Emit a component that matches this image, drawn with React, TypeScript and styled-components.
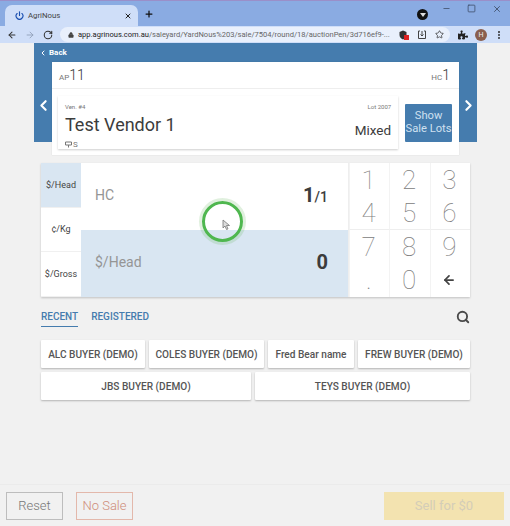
import styled, { createGlobalStyle } from "styled-components";
import { FC } from "react";
import { ArrowLeft, ArrowRight, ChevronLeft, ChevronRight, Lock, Minus, MoreVertical, Plus, Power, RotateCw, Search, Square, Star, X } from "lucide-react";
import { FaPuzzlePiece } from "react-icons/fa";

const Global = createGlobalStyle`
  html, body { margin: 0; padding: 0; background: #f1f1f1; }
  * { box-sizing: border-box; }
  body { font-family: Roboto, "Liberation Sans", sans-serif; }
`;

const Page = styled.div`
  width: 510px;
  height: 526px;
  position: relative;
  overflow: hidden;
  display: flex;
  flex-direction: column;
  background: #f1f1f1;
  color: #444;
`;

/* browser chrome */
const TabStrip = styled.div`
  height: 26px;
  background: #8aabe2;
  border-top: 1px solid #9a8fc9;
  display: flex;
  align-items: flex-end;
  padding-left: 5px;
  color: #1f2a3d;
  position: relative;
`;
const Tab = styled.div`
  width: 133px;
  height: 21px;
  background: #cfdef8;
  border-radius: 7px 7px 0 0;
  display: flex;
  align-items: center;
  padding: 0 6px 0 10px;
  gap: 4px;
  font-size: 7.8px;
  color: #444;
  span { flex: 1; }
`;
const NewTab = styled.div`
  margin: 0 0 7px 6px;
  display: flex;
`;
const WinControls = styled.div`
  margin-left: auto;
  display: flex;
  gap: 16px;
  align-self: flex-start;
  padding: 3px 8px 0 0;
  color: #3b4a63;
`;
const MediaDot = styled.div`
  position: absolute;
  left: 417px;
  top: 8px;
  width: 11px;
  height: 11px;
  border-radius: 50%;
  background: #111;
  &:after {
    content: "";
    position: absolute;
    left: 2.5px;
    top: 4px;
    border: 3px solid transparent;
    border-top: 4px solid #ddd;
  }
`;
const Toolbar = styled.div`
  height: 17px;
  background: #cfdef8;
  display: flex;
  align-items: center;
  padding: 0 6px 0 7px;
  color: #333;
  gap: 8px;
`;
const NavIcons = styled.div`
  display: flex;
  gap: 8px;
  width: 46px;
`;
const Omnibox = styled.div`
  width: 390px;
  height: 15px;
  margin-left: -1px;
  border-radius: 8px;
  background: #e9f0fc;
  display: flex;
  align-items: center;
  padding: 0 6px 0 8px;
  gap: 4px;
  font-size: 7.55px;
  color: #222;
  white-space: nowrap;
  span { color: #666; }
`;
const OmniIcons = styled.div`
  margin-left: auto;
  display: flex;
  gap: 8px;
  align-items: center;
`;
const ToolIcons = styled.div`
  display: flex;
  align-items: center;
  gap: 7px;
  margin-left: auto;
`;
const Avatar = styled.div`
  width: 12px;
  height: 12px;
  border-radius: 50%;
  background: #8a5f4e;
  color: #eee;
  font-size: 7px;
  display: flex;
  align-items: center;
  justify-content: center;
`;

/* lot header */
const Main = styled.main`
  flex: 1;
  display: flex;
  flex-direction: column;
  padding: 0 34px;
`;
const BluePanel = styled.section`
  width: 443px;
  height: 99px;
  background: #457cae;
  margin-bottom: 21px;
`;
const BackRow = styled.div`
  height: 19px;
  display: flex;
  align-items: center;
  padding-left: 5px;
  gap: 2px;
  color: #fff;
  font-size: 8px;
  font-weight: 700;
`;
const LotRow = styled.div`
  display: flex;
  align-items: flex-start;
`;
const Arrow = styled.div`
  width: 18px;
  height: 86px;
  display: flex;
  align-items: center;
  justify-content: center;
  color: #fff;
`;
const LotCard = styled.div`
  width: 407px;
  height: 93px;
  background: #fff;
  box-shadow: 0 0 1px rgba(0, 0, 0, 0.15);
`;
const CountRow = styled.div`
  height: 27px;
  display: flex;
  justify-content: space-between;
  align-items: center;
  padding: 0 9px 0 7px;
  border-bottom: 1px solid #eeeeee;
`;
const Count = styled.div`
  font-size: 14px;
  font-weight: 300;
  color: #333;
  small { font-size: 8px; font-weight: 400; color: #777; }
`;
const VendorRow = styled.div`
  display: flex;
  align-items: center;
  padding: 7px 7px 0 6px;
  gap: 7px;
`;
const VendorCard = styled.div`
  width: 341px;
  height: 53px;
  background: #fff;
  box-shadow: 0 1px 2px rgba(0, 0, 0, 0.2);
  padding: 7px 7px 0;
`;
const VendorTop = styled.div`
  display: flex;
  justify-content: space-between;
  font-size: 6px;
  line-height: 8px;
  color: #777;
`;
const VendorMain = styled.div`
  display: flex;
  justify-content: space-between;
  margin-top: 4px;
  height: 20px;
  font-size: 18px;
  color: #3c3c3c;
  line-height: 20px;
`;
const Mixed = styled.span`
  font-size: 13.5px;
  margin-top: 5px;
`;
const Sex = styled.div`
  display: flex;
  align-items: center;
  gap: 1px;
  margin-top: 5px;
  font-size: 8px;
  color: #777;
`;
const ShowLots = styled.button`
  width: 47px;
  height: 38px;
  border: none;
  border-radius: 1px;
  padding: 0;
  background: #457cae;
  color: #cfe0f0;
  white-space: nowrap;
  font: 400 11.2px/12.5px Roboto, sans-serif;
`;

/* entry panel */
const EntryPanel = styled.section`
  margin-left: 7px;
  width: 429px;
  height: 134px;
  display: grid;
  grid-template-columns: 40px 267px 122px;
  background: #fff;
  box-shadow: 0 1px 2px rgba(0, 0, 0, 0.2);
`;
const Modes = styled.div`
  display: grid;
  grid-template-rows: repeat(3, 1fr);
`;
const Mode = styled.div<{ $active?: boolean }>`
  display: flex;
  align-items: center;
  justify-content: center;
  font-size: 9px;
  color: #444;
  background: ${(p) => (p.$active ? "#d9e6f2" : "#fff")};
  border-bottom: 1px solid #f0f0f0;
`;
const Values = styled.div`
  display: grid;
  grid-template-rows: 67px 67px;
`;
const ValueRow = styled.div<{ $active?: boolean }>`
  display: flex;
  justify-content: space-between;
  align-items: center;
  padding: 0 20px 3px 14px;
  background: ${(p) => (p.$active ? "#d9e6f2" : "#fff")};
  font-size: 14px;
  color: #959595;
  b { font-size: 20px; color: #3c3c3c; font-weight: 700; }
  small { font-size: 14px; font-weight: 500; color: #3c3c3c; }
`;
const Keypad = styled.div`
  display: grid;
  grid-template-columns: repeat(3, 1fr);
  grid-template-rows: repeat(4, 1fr);
  border-left: 1px solid #eee;
`;
const Key = styled.div<{ $mid?: boolean }>`
  display: flex;
  align-items: center;
  justify-content: center;
  font-size: 26px;
  font-weight: 100;
  color: #808080;
  padding-right: 2px;
  border-left: 1px solid #f3f3f3;
  border-bottom: ${(p) => (p.$mid ? "1px solid #eee" : "none")};
`;

/* buyers */
const TabsRow = styled.div`
  margin: 11px 7px 0;
  width: 429px;
  height: 25px;
  display: flex;
  align-items: flex-start;
  gap: 13px;
  color: #457cae;
  font-size: 10px;
  font-weight: 500;
`;
const BuyerTab = styled.div<{ $active?: boolean }>`
  height: 19px;
  padding-top: 2px;
  line-height: 13px;
  border-bottom: ${(p) => (p.$active ? "1px solid #457cae" : "none")};
`;
const SearchBtn = styled.div`
  margin: 2px 0 0 auto;
  color: #4a4a4a;
  display: flex;
`;
const BuyerRow = styled.div<{ $columns: string; $top: number }>`
  margin: ${(p) => p.$top}px 0 0 7px;
  width: 429px;
  display: grid;
  grid-template-columns: ${(p) => p.$columns};
  gap: 4px;
`;
const BuyerBtn = styled.div`
  height: 28px;
  background: #fff;
  border-radius: 1px;
  box-shadow: 0 1px 2px rgba(0, 0, 0, 0.25);
  display: flex;
  align-items: center;
  justify-content: center;
  font-size: 10.1px;
  font-weight: 500;
  color: #555;
  white-space: nowrap;
`;

/* footer */
const Footer = styled.footer`
  height: 42px;
  border-top: 1px solid #ebebeb;
  display: flex;
  align-items: flex-start;
  padding: 7px 6px 0;
  gap: 13px;
`;
const FootBtn = styled.button<{ $color: string; $text: string }>`
  width: 57px;
  height: 28px;
  background: transparent;
  border: 1px solid ${(p) => p.$color};
  color: ${(p) => p.$text};
  font: 300 13px Roboto, sans-serif;
  padding: 0 0 2px;
`;
const SellBtn = styled.button`
  width: 120px;
  height: 28px;
  margin-left: auto;
  background: #f3e3b0;
  border: none;
  color: #d4cdb8;
  font: 400 13px Roboto, sans-serif;
  padding: 0 0 2px;
`;

/* cursor highlight from the recording */
const CursorRing = styled.div`
  position: absolute;
  left: 202px;
  top: 201px;
  width: 41px;
  height: 41px;
  border-radius: 50%;
  border: 3px solid #4fb74f;
  box-shadow: 0 0 0 3px rgba(100, 180, 90, 0.2);
`;
const Pointer = styled.svg`
  position: absolute;
  left: 222px;
  top: 219px;
`;

const keys = ["1", "2", "3", "4", "5", "6", "7", "8", "9", ".", "0"];

const App: FC = () => {
  return (
    <Page>
      <Global />
      <TabStrip>
        <Tab>
          <Power size={9} color="#1b4fb0" strokeWidth={3} />
          <span>AgriNous</span>
          <X size={8} strokeWidth={3} color="#222" />
        </Tab>
        <NewTab><Plus size={10} strokeWidth={3} color="#111" /></NewTab>
        <WinControls>
          <Minus size={9} />
          <Square size={9} />
          <X size={10} />
        </WinControls>
        <MediaDot />
      </TabStrip>
      <Toolbar>
        <NavIcons>
          <ArrowLeft size={10} strokeWidth={2.5} />
          <ArrowRight size={10} strokeWidth={2} color="#8d9bb5" />
          <RotateCw size={10} strokeWidth={2.5} />
        </NavIcons>
        <Omnibox>
          <Lock size={6} fill="#444" color="#444" />
          <div>app.agrinous.com.au<span>/saleyard/YardNous%203/sale/7504/round/18/auctionPen/3d716ef9-...</span></div>
          <OmniIcons>
            <svg width="10" height="10" viewBox="0 0 10 10">
              <path d="M4 0.5 7.500 2v3c0 2-1.500 3.500-3.500 4.500C2 8.500.5 7 .5 5V2z" fill="#333" />
              <rect x="5" y="5" width="5" height="5" fill="#d22" />
            </svg>
            <svg width="10" height="10" viewBox="0 0 10 10" fill="none" stroke="#444">
              <path d="M3 1H1.500v7.500h7V1H7M5 1v5M3.500 4.500 5 6l1.500-1.500" />
            </svg>
            <Star size={9} strokeWidth={2} color="#333" />
          </OmniIcons>
        </Omnibox>
        <ToolIcons>
          <FaPuzzlePiece size={10} color="#222" />
          <Avatar>H</Avatar>
          <MoreVertical size={10} strokeWidth={3} color="#333" />
        </ToolIcons>
      </Toolbar>

      <Main>
        <BluePanel>
          <BackRow><ChevronLeft size={8} strokeWidth={3} />Back</BackRow>
          <LotRow>
            <Arrow><ChevronLeft size={17} strokeWidth={3} /></Arrow>
            <LotCard>
              <CountRow>
                <Count><small>AP</small>11</Count>
                <Count><small>HC</small>1</Count>
              </CountRow>
              <VendorRow>
                <VendorCard>
                  <VendorTop><span>Ven. #4</span><span>Lot 2007</span></VendorTop>
                  <VendorMain>
                    <span>Test Vendor 1</span>
                    <Mixed>Mixed</Mixed>
                  </VendorMain>
                  <Sex>
                    <svg width="7" height="7" viewBox="0 0 7 7" fill="none" stroke="#777">
                      <path d="M.5 1h6v3h-6zM3.500 4v2.500" />
                    </svg>
                    S
                  </Sex>
                </VendorCard>
                <ShowLots>Show<br />Sale Lots</ShowLots>
              </VendorRow>
            </LotCard>
            <Arrow><ChevronRight size={17} strokeWidth={3} /></Arrow>
          </LotRow>
        </BluePanel>

        <EntryPanel>
          <Modes>
            <Mode $active>$/Head</Mode>
            <Mode>¢/Kg</Mode>
            <Mode>$/Gross</Mode>
          </Modes>
          <Values>
            <ValueRow>HC<b>1<small>/1</small></b></ValueRow>
            <ValueRow $active>$/Head<b>0</b></ValueRow>
          </Values>
          <Keypad>
            {keys.map((k, i) => (
              <Key key={k} $mid={i >= 3 && i <= 5}>{k}</Key>
            ))}
            <Key>
              <ArrowLeft size={14} strokeWidth={3} color="#444" />
            </Key>
          </Keypad>
        </EntryPanel>

        <TabsRow>
          <BuyerTab $active>RECENT</BuyerTab>
          <BuyerTab>REGISTERED</BuyerTab>
          <SearchBtn><Search size={14} strokeWidth={3.2} /></SearchBtn>
        </TabsRow>
        <BuyerRow $columns="104px 115px 86px 112px" $top={7}>
          <BuyerBtn>ALC BUYER (DEMO)</BuyerBtn>
          <BuyerBtn>COLES BUYER (DEMO)</BuyerBtn>
          <BuyerBtn>Fred Bear name</BuyerBtn>
          <BuyerBtn>FREW BUYER (DEMO)</BuyerBtn>
        </BuyerRow>
        <BuyerRow $columns="210px 215px" $top={4}>
          <BuyerBtn>JBS BUYER (DEMO)</BuyerBtn>
          <BuyerBtn>TEYS BUYER (DEMO)</BuyerBtn>
        </BuyerRow>
      </Main>

      <Footer>
        <FootBtn $color="#bdbdbd" $text="#777">Reset</FootBtn>
        <FootBtn $color="#e3b8ab" $text="#cf8d7a">No Sale</FootBtn>
        <SellBtn>Sell for $0</SellBtn>
      </Footer>

      <CursorRing />
      <Pointer width="9" height="12" viewBox="0 0 9 12">
        <path d="M1 1v8l2-2 1.500 3.500 1.500-.6L4.500 6.500H7.500z" fill="#ddd" stroke="#777" strokeWidth="0.8" />
      </Pointer>
    </Page>
  );
};

export default App;
